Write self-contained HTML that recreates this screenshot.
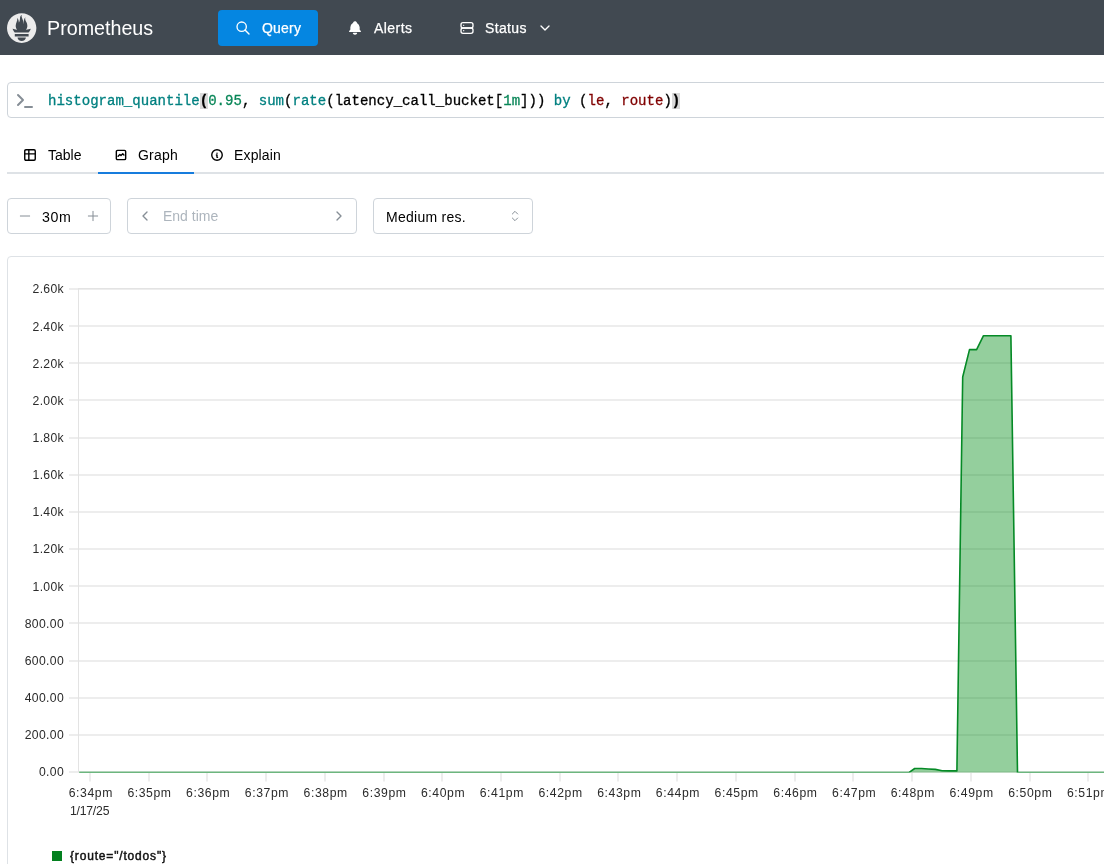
<!DOCTYPE html>
<html><head><meta charset="utf-8">
<style>
*{box-sizing:border-box;margin:0;padding:0}
html,body{width:1104px;height:864px;overflow:hidden;background:#fff;font-family:"Liberation Sans",sans-serif;color:#000}
.abs{position:absolute}
#hdr{position:absolute;left:0;top:0;width:1104px;height:55px;background:#414951}
.t{position:absolute;white-space:nowrap;line-height:1;will-change:transform}
svg{position:absolute;overflow:visible;will-change:transform}
#qbtn{position:absolute;left:218px;top:10px;width:100px;height:36px;border-radius:4px;background:#0586e1}
#qbox{position:absolute;left:7px;top:82px;width:1200px;height:36px;border:1px solid #ced4da;border-radius:4px;background:#fff}
.mono{font-family:"Liberation Mono",monospace;font-size:14.05px;-webkit-text-stroke:0.3px currentColor}
.hl{background:#dadada;font-weight:bold}
.box{position:absolute;border:1px solid #ced4da;border-radius:4px;background:#fff}
.ax{font-family:"Liberation Sans",sans-serif;font-size:12.2px;fill:#2b2b2b}
.ay{letter-spacing:0.33px}
.axx{letter-spacing:0.6px}
.lg{font-family:"Liberation Sans",sans-serif;font-size:12px;fill:#111;stroke:#111;stroke-width:0.45px;letter-spacing:0.83px}
</style></head><body>
<div id="hdr"></div>
<svg style="left:7px;top:13px" width="29.4" height="30" viewBox="0 0 113.333 114" preserveAspectRatio="none"><path fill="#ececec" d="M56.667,0.667C25.372,0.667,0,26.036,0,57.332c0,31.295,25.372,56.666,56.667,56.666s56.666-25.371,56.666-56.666C113.333,26.036,87.961,0.667,56.667,0.667z M56.667,106.722c-8.904,0-16.123-5.948-16.123-13.283H72.79C72.79,100.773,65.571,106.722,56.667,106.722z M83.297,89.04H30.034v-9.658h53.264V89.04z M83.106,74.411h-52.92c-0.176-0.203-0.356-0.403-0.526-0.609c-5.452-6.62-6.736-10.076-7.983-13.598c-0.021-0.116,6.611,1.355,11.314,2.413c0,0,2.42,0.56,5.958,1.205c-3.397-3.982-5.414-9.044-5.414-14.218c0-11.359,8.712-21.285,5.569-29.308c3.059,0.249,6.331,6.456,6.552,16.161c3.252-4.494,4.613-12.701,4.613-17.733c0-5.21,3.433-11.262,6.867-11.469c-3.061,5.045,0.793,9.37,4.219,20.099c1.285,4.03,1.121,10.812,2.113,15.113C63.797,33.534,65.333,20.5,71,16c-2.5,5.667,0.37,12.758,2.333,16.167c3.167,5.5,5.087,9.667,5.087,17.548c0,5.284-1.951,10.259-5.242,14.148c3.742-0.702,6.326-1.335,6.326-1.335l12.152-2.371C91.657,60.156,89.891,67.418,83.106,74.411z"/></svg>
<div class="t" style="left:46.7px;top:19.1px;font-size:19.7px;color:#fff">Prometheus</div>
<div id="qbtn"></div>
<div class="t" style="left:262px;top:21px;font-size:14px;letter-spacing:0.2px;color:#fff;-webkit-text-stroke:0.25px #fff">Query</div>
<div class="t" style="left:374px;top:21px;font-size:14px;letter-spacing:0.45px;color:#fff;-webkit-text-stroke:0.25px #fff">Alerts</div>
<div class="t" style="left:485px;top:21px;font-size:14px;letter-spacing:0.35px;color:#fff;-webkit-text-stroke:0.25px #fff">Status</div>

<div id="qbox"></div>
<div class="t mono" style="left:48px;top:94.4px"><span style="color:#008080">histogram_quantile</span><span class="hl">(</span><span style="color:#098658">0.95</span>, <span style="color:#008080">sum</span>(<span style="color:#008080">rate</span>(latency_call_bucket[<span style="color:#098658">1m</span>])) <span style="color:#008080">by</span> (<span style="color:#800000">le</span>, <span style="color:#800000">route</span>)<span class="hl">)</span></div>

<div class="abs" style="left:7px;top:172px;width:1100px;height:2px;background:#dee2e6"></div>
<div class="abs" style="left:98px;top:172px;width:96px;height:2px;background:#167cdd"></div>
<div class="t" style="left:48px;top:148px;font-size:14px">Table</div>
<div class="t" style="left:138.3px;top:148px;font-size:14px;letter-spacing:0.2px">Graph</div>
<div class="t" style="left:233.8px;top:148px;font-size:14px;letter-spacing:0.15px">Explain</div>

<div class="box" style="left:7px;top:198px;width:104px;height:36px"></div>
<div class="t" style="left:42.3px;top:209.5px;font-size:14.2px;letter-spacing:0.6px">30m</div>
<div class="box" style="left:127px;top:198px;width:230px;height:36px"></div>
<div class="t" style="left:163px;top:209px;font-size:14px;color:#adb5bd">End time</div>
<div class="box" style="left:373px;top:198px;width:160px;height:36px"></div>
<div class="t" style="left:385.8px;top:209.5px;font-size:14px;letter-spacing:0.27px">Medium res.</div>

<div class="box" style="left:7px;top:256px;width:1200px;height:700px;border-color:#dee2e6"></div>
<svg id="chart" style="left:0;top:0" width="1104" height="864" viewBox="0 0 1104 864">
<rect x="69" y="771" width="1040" height="2" fill="#ededed"/>
<rect x="69" y="734" width="1040" height="2" fill="#ededed"/>
<rect x="69" y="697" width="1040" height="2" fill="#ededed"/>
<rect x="69" y="660" width="1040" height="2" fill="#ededed"/>
<rect x="69" y="622" width="1040" height="2" fill="#ededed"/>
<rect x="69" y="585" width="1040" height="2" fill="#ededed"/>
<rect x="69" y="548" width="1040" height="2" fill="#ededed"/>
<rect x="69" y="511" width="1040" height="2" fill="#ededed"/>
<rect x="69" y="474" width="1040" height="2" fill="#ededed"/>
<rect x="69" y="437" width="1040" height="2" fill="#ededed"/>
<rect x="69" y="399" width="1040" height="2" fill="#ededed"/>
<rect x="69" y="362" width="1040" height="2" fill="#ededed"/>
<rect x="69" y="325" width="1040" height="2" fill="#ededed"/>
<rect x="69" y="288" width="1040" height="2" fill="#ededed"/>
<rect x="78" y="288" width="1030" height="1" fill="#e3e3e3"/>
<rect x="78" y="288" width="1" height="484" fill="#e3e3e3"/>
<rect x="89" y="773" width="2" height="8.5" fill="#ededed"/>
<rect x="148" y="773" width="2" height="8.5" fill="#ededed"/>
<rect x="206" y="773" width="2" height="8.5" fill="#ededed"/>
<rect x="265" y="773" width="2" height="8.5" fill="#ededed"/>
<rect x="324" y="773" width="2" height="8.5" fill="#ededed"/>
<rect x="383" y="773" width="2" height="8.5" fill="#ededed"/>
<rect x="441" y="773" width="2" height="8.5" fill="#ededed"/>
<rect x="500" y="773" width="2" height="8.5" fill="#ededed"/>
<rect x="559" y="773" width="2" height="8.5" fill="#ededed"/>
<rect x="617" y="773" width="2" height="8.5" fill="#ededed"/>
<rect x="676" y="773" width="2" height="8.5" fill="#ededed"/>
<rect x="735" y="773" width="2" height="8.5" fill="#ededed"/>
<rect x="794" y="773" width="2" height="8.5" fill="#ededed"/>
<rect x="852" y="773" width="2" height="8.5" fill="#ededed"/>
<rect x="911" y="773" width="2" height="8.5" fill="#ededed"/>
<rect x="970" y="773" width="2" height="8.5" fill="#ededed"/>
<rect x="1029" y="773" width="2" height="8.5" fill="#ededed"/>
<rect x="1087" y="773" width="2" height="8.5" fill="#ededed"/>
<clipPath id="cp"><rect x="79.2" y="280" width="1030" height="492.62"/></clipPath>
<g clip-path="url(#cp)"><path d="M79 772.6 L908.8 772.6 L914.7 768.5 L921.5 768.5 L928.4 769.0 L935.3 769.4 L942.1 770.7 L949.0 770.9 L956.9 770.9 L962.7 377.0 L969.5 349.6 L976.6 349.6 L983.5 335.7 L990.1 335.7 L997.0 335.7 L1003.8 335.7 L1010.9 335.7 L1017.5 772.6 L1110 772.6 L1110 774 L79 774 Z" fill="rgba(0,140,22,0.42)"/><path d="M79 772.6 L908.8 772.6 L914.7 768.5 L921.5 768.5 L928.4 769.0 L935.3 769.4 L942.1 770.7 L949.0 770.9 L956.9 770.9 L962.7 377.0 L969.5 349.6 L976.6 349.6 L983.5 335.7 L990.1 335.7 L997.0 335.7 L1003.8 335.7 L1010.9 335.7 L1017.5 772.6 L1110 772.6" fill="none" stroke="#058a26" stroke-width="1.6" stroke-linejoin="round"/></g>
<text x="64" y="776.30" text-anchor="end" class="ax ay">0.00</text>
<text x="64" y="739.15" text-anchor="end" class="ax ay">200.00</text>
<text x="64" y="702.00" text-anchor="end" class="ax ay">400.00</text>
<text x="64" y="664.85" text-anchor="end" class="ax ay">600.00</text>
<text x="64" y="627.70" text-anchor="end" class="ax ay">800.00</text>
<text x="64" y="590.55" text-anchor="end" class="ax ay">1.00k</text>
<text x="64" y="553.40" text-anchor="end" class="ax ay">1.20k</text>
<text x="64" y="516.25" text-anchor="end" class="ax ay">1.40k</text>
<text x="64" y="479.10" text-anchor="end" class="ax ay">1.60k</text>
<text x="64" y="441.95" text-anchor="end" class="ax ay">1.80k</text>
<text x="64" y="404.80" text-anchor="end" class="ax ay">2.00k</text>
<text x="64" y="367.65" text-anchor="end" class="ax ay">2.20k</text>
<text x="64" y="330.50" text-anchor="end" class="ax ay">2.40k</text>
<text x="64" y="293.35" text-anchor="end" class="ax ay">2.60k</text>
<text x="90.80" y="796.9" text-anchor="middle" class="ax axx">6:34pm</text>
<text x="149.52" y="796.9" text-anchor="middle" class="ax axx">6:35pm</text>
<text x="208.24" y="796.9" text-anchor="middle" class="ax axx">6:36pm</text>
<text x="266.96" y="796.9" text-anchor="middle" class="ax axx">6:37pm</text>
<text x="325.68" y="796.9" text-anchor="middle" class="ax axx">6:38pm</text>
<text x="384.40" y="796.9" text-anchor="middle" class="ax axx">6:39pm</text>
<text x="443.12" y="796.9" text-anchor="middle" class="ax axx">6:40pm</text>
<text x="501.84" y="796.9" text-anchor="middle" class="ax axx">6:41pm</text>
<text x="560.56" y="796.9" text-anchor="middle" class="ax axx">6:42pm</text>
<text x="619.28" y="796.9" text-anchor="middle" class="ax axx">6:43pm</text>
<text x="678.00" y="796.9" text-anchor="middle" class="ax axx">6:44pm</text>
<text x="736.72" y="796.9" text-anchor="middle" class="ax axx">6:45pm</text>
<text x="795.44" y="796.9" text-anchor="middle" class="ax axx">6:46pm</text>
<text x="854.16" y="796.9" text-anchor="middle" class="ax axx">6:47pm</text>
<text x="912.88" y="796.9" text-anchor="middle" class="ax axx">6:48pm</text>
<text x="971.60" y="796.9" text-anchor="middle" class="ax axx">6:49pm</text>
<text x="1030.32" y="796.9" text-anchor="middle" class="ax axx">6:50pm</text>
<text x="1089.04" y="796.9" text-anchor="middle" class="ax axx">6:51pm</text>
<text x="89.60" y="814.6" text-anchor="middle" class="ax" style="letter-spacing:-0.2px">1/17/25</text>
<rect x="52" y="851" width="10" height="10" fill="#03801f"/>
<text x="70" y="859.6" class="lg">{route="/todos"}</text>
</svg>
<svg style="left:235px;top:20px" width="16" height="16" viewBox="0 0 24 24" fill="none" stroke="#fff" stroke-width="2" stroke-linecap="round" stroke-linejoin="round"><path d="M10 10m-7 0a7 7 0 1 0 14 0a7 7 0 1 0 -14 0"/><path d="M21 21l-6 -6"/></svg>
<svg style="left:347px;top:20px" width="16" height="16" viewBox="0 0 24 24" fill="#fff" stroke="none" stroke-width="0" stroke-linecap="round" stroke-linejoin="round"><path d="M14.235 19c.865 0 1.322 1.024 .745 1.668a3.992 3.992 0 0 1 -2.98 1.332a3.992 3.992 0 0 1 -2.98 -1.332c-.552 -.616 -.158 -1.579 .634 -1.661l.11 -.006h4.471z"/><path d="M12 2c1.358 0 2.506 .903 2.875 2.141l.046 .171l.008 .043a8.013 8.013 0 0 1 4.024 6.069l.028 .287l.019 .289v2.931l.021 .136a3 3 0 0 0 1.143 1.847l.167 .117l.162 .099c.86 .487 .56 1.766 -.377 1.864l-.116 .006h-16c-1.028 0 -1.387 -1.364 -.493 -1.87a3 3 0 0 0 1.472 -2.063l.021 -.143l.001 -2.97a8 8 0 0 1 3.821 -6.454l.248 -.146l.01 -.043a3.003 3.003 0 0 1 2.562 -2.29l.182 -.017l.176 -.004z"/></svg>
<svg style="left:458.5px;top:20px" width="16" height="16" viewBox="0 0 24 24" fill="none" stroke="#fff" stroke-width="2" stroke-linecap="round" stroke-linejoin="round"><path d="M3 7a3 3 0 0 1 3 -3h12a3 3 0 0 1 3 3v2a3 3 0 0 1 -3 3h-12a3 3 0 0 1 -3 -3z"/><path d="M3 15a3 3 0 0 1 3 -3h12a3 3 0 0 1 3 3v2a3 3 0 0 1 -3 3h-12a3 3 0 0 1 -3 -3z"/><path d="M7 8l0 .01"/><path d="M7 16l0 .01"/></svg>
<svg style="left:537px;top:20px" width="16" height="16" viewBox="0 0 24 24" fill="none" stroke="#fff" stroke-width="2" stroke-linecap="round" stroke-linejoin="round"><path d="M6 9l6 6l6 -6"/></svg>
<svg style="left:13px;top:88px" width="24" height="24" viewBox="0 0 24 24" fill="none" stroke="#868e96" stroke-width="2" stroke-linecap="round" stroke-linejoin="round"><path d="M5 7l5 5l-5 5"/><path d="M12 19l7 0"/></svg>
<svg style="left:23px;top:148.4px" width="14" height="14" viewBox="0 0 24 24" fill="none" stroke="#000" stroke-width="2.4" stroke-linecap="round" stroke-linejoin="round"><path d="M3 5a2 2 0 0 1 2 -2h14a2 2 0 0 1 2 2v14a2 2 0 0 1 -2 2h-14a2 2 0 0 1 -2 -2v-14z"/><path d="M3 10h18"/><path d="M10 3v18"/></svg>
<svg style="left:114px;top:148.4px" width="14" height="14" viewBox="0 0 24 24" fill="none" stroke="#000" stroke-width="2.4" stroke-linecap="round" stroke-linejoin="round"><path d="M4 18v-12a2 2 0 0 1 2 -2h12a2 2 0 0 1 2 2v12a2 2 0 0 1 -2 2h-12a2 2 0 0 1 -2 -2z"/><path d="M7 14l3 -3l2 2l3 -3l2 2"/></svg>
<svg style="left:210px;top:148.4px" width="14" height="14" viewBox="0 0 24 24" fill="none" stroke="#000" stroke-width="2.4" stroke-linecap="round" stroke-linejoin="round"><path d="M3 12a9 9 0 1 0 18 0a9 9 0 0 0 -18 0"/><path d="M12 9h.01"/><path d="M11 12h1v4h1"/></svg>
<svg style="left:17px;top:208px" width="16" height="16" viewBox="0 0 24 24" fill="none" stroke="#868e96" stroke-width="1.5" stroke-linecap="round" stroke-linejoin="round"><path d="M5 12l14 0"/></svg>
<svg style="left:85.3px;top:208px" width="16" height="16" viewBox="0 0 24 24" fill="none" stroke="#868e96" stroke-width="1.5" stroke-linecap="round" stroke-linejoin="round"><path d="M12 5l0 14"/><path d="M5 12l14 0"/></svg>
<svg style="left:137.3px;top:208px" width="16" height="16" viewBox="0 0 24 24" fill="none" stroke="#868e96" stroke-width="2" stroke-linecap="round" stroke-linejoin="round"><path d="M15 6l-6 6l6 6"/></svg>
<svg style="left:331.2px;top:208px" width="16" height="16" viewBox="0 0 24 24" fill="none" stroke="#868e96" stroke-width="2" stroke-linecap="round" stroke-linejoin="round"><path d="M9 6l6 6l-6 6"/></svg>
<svg style="left:507px;top:208px" width="16" height="16" viewBox="0 0 24 24" fill="none" stroke="#868e96" stroke-width="1.5" stroke-linecap="round" stroke-linejoin="round"><path d="M8 9l4 -4l4 4"/><path d="M16 15l-4 4l-4 -4"/></svg>
</body></html>
